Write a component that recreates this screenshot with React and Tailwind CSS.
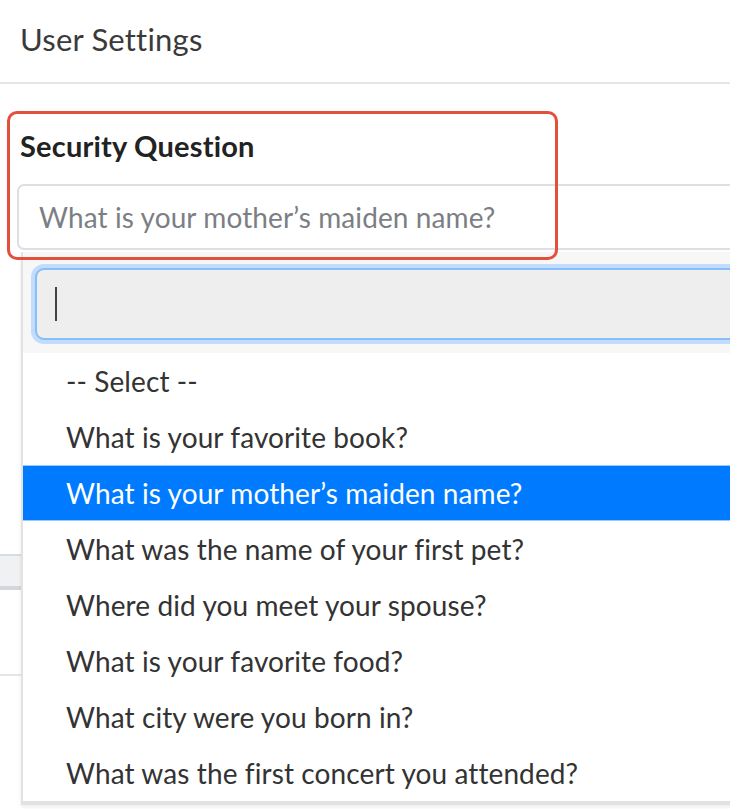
const options = [
  '-- Select --',
  'What is your favorite book?',
  'What is your mother\u2019s maiden name?',
  'What was the name of your first pet?',
  'Where did you meet your spouse?',
  'What is your favorite food?',
  'What city were you born in?',
  'What was the first concert you attended?',
];

export default function App() {
  const selected = 2;

  return (
    <div className="w-[730px] h-[809px] overflow-hidden bg-white font-['Lato','Liberation_Sans',sans-serif] text-[#333]">
      <header className="h-[84px] px-5 flex items-center border-b-2 border-[#e6e6e6]">
        <h1 className="text-[31px] tracking-[0.2px] text-[#3a3a3a] pb-1">User Settings</h1>
      </header>

      <main className="relative">
        {/* form field */}
        <div className="pt-[43px] pl-[17px]">
          <label className="block pl-[3px] text-[29px] font-bold text-[#222] leading-[38px] tracking-[0.2px]">Security Question</label>
          <div className="mt-[19px] h-[66px] w-[740px] border-2 border-[#dcdfe3] rounded-[7px] flex items-center pl-5 text-[28px] tracking-[0.1px] text-[#7b7f85]">
            What is your mother&rsquo;s maiden name?
          </div>
        </div>

        {/* page content behind the dropdown */}
        <div className="mt-[304px] w-[30px] h-[36px] border-t-2 border-[#d9dcdf] border-b-4 border-b-[#d3d6da] bg-[#eff1f3]" />
        <div className="mt-[84px] w-[30px] border-t-2 border-[#e3e5e8]" />

        {/* open dropdown */}
        <div className="absolute left-[21px] top-[168px] w-[740px] bg-white border-l-2 border-b-4 border-[#e2e2e2] shadow-[0_2px_4px_rgba(0,0,0,0.08)]">
          <div className="bg-[#f7f7f7] pt-[16px] pb-[13px] pl-[12px]">
            <div className="h-[72px] rounded-[9px] border-2 border-[#86bdfa] ring-4 ring-[#c2dcfb] bg-[#eeeeee] flex items-center pl-[18px]">
              <span className="w-[2px] h-[34px] bg-[#444]" />
            </div>
          </div>
          <ul>
            {options.map((opt, i) => (
              <li
                key={opt}
                className={
                  i === selected
                    ? 'h-[56px] flex items-center pl-[43px] text-[28px] tracking-[0.1px] bg-[#007bff] text-white border-y border-[#9cc8fb]'
                    : 'h-[56px] flex items-center pl-[43px] text-[28px] tracking-[0.1px] text-[#333]'
                }
              >
                {opt}
              </li>
            ))}
          </ul>
        </div>

        {/* annotation outline */}
        <div className="absolute z-10 left-[7px] top-[27px] w-[551px] h-[149px] border-[3px] border-[#e2503c] rounded-[10px] pointer-events-none" />
      </main>
    </div>
  );
}
